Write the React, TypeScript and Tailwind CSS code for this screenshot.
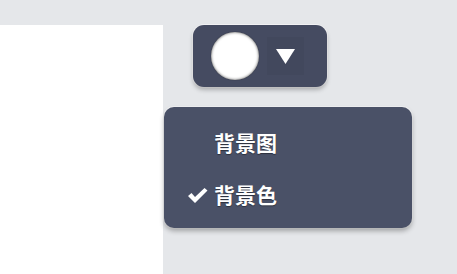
export default function App() {
  return (
    <div className="flex h-[274px] w-[457px] overflow-hidden bg-[#e5e7ea] font-['Noto_Sans_CJK_SC',sans-serif]">
      <div className="w-[163px] shrink-0 pt-[25px]">
        <div className="h-full bg-white" />
      </div>
      <div className="flex flex-col pt-[25px]">
        <div className="ml-[30px] flex h-[62px] w-[134px] items-center rounded-[11px] bg-[#454b61] pl-[18px] shadow-[0_3px_4px_rgba(0,0,0,0.25),0_0_0_1px_rgba(255,255,255,0.6)]">
          <div className="h-[48px] w-[48px] rounded-full bg-white shadow-[inset_0_0_3px_rgba(0,0,0,0.7),0_0_1px_rgba(0,0,0,0.6)]" />
          <div className="ml-[8px] flex h-[38px] w-[37px] items-center justify-center bg-[#42485d]">
            <svg width="21" height="17" viewBox="0 0 21 17">
              <path d="M1 1 L20 1 L10.5 16 Z" fill="#ffffff" />
            </svg>
          </div>
        </div>
        <div className="ml-px mt-[20px] flex h-[121px] w-[248px] flex-col rounded-[10px] bg-[#4a5167] pt-[10px] shadow-[0_3px_5px_rgba(0,0,0,0.3),0_0_0_1px_rgba(255,255,255,0.5)]">
          <div className="flex h-[52px] items-center pl-[50px] text-[21px] font-bold text-white [text-shadow:0_1px_1px_rgba(0,0,0,0.4)]">
            背景图
          </div>
          <div className="flex h-[52px] items-center pl-[23px] text-[21px] font-bold text-white [text-shadow:0_1px_1px_rgba(0,0,0,0.4)]">
            <svg width="21" height="17" viewBox="0 0 21 17" className="mr-[6px]">
              <path d="M1 9 L4.5 6 L8 10 L17.5 1 L20.5 3.5 L8 16 Z" fill="#ffffff" />
            </svg>
            背景色
          </div>
        </div>
      </div>
    </div>
  );
}
